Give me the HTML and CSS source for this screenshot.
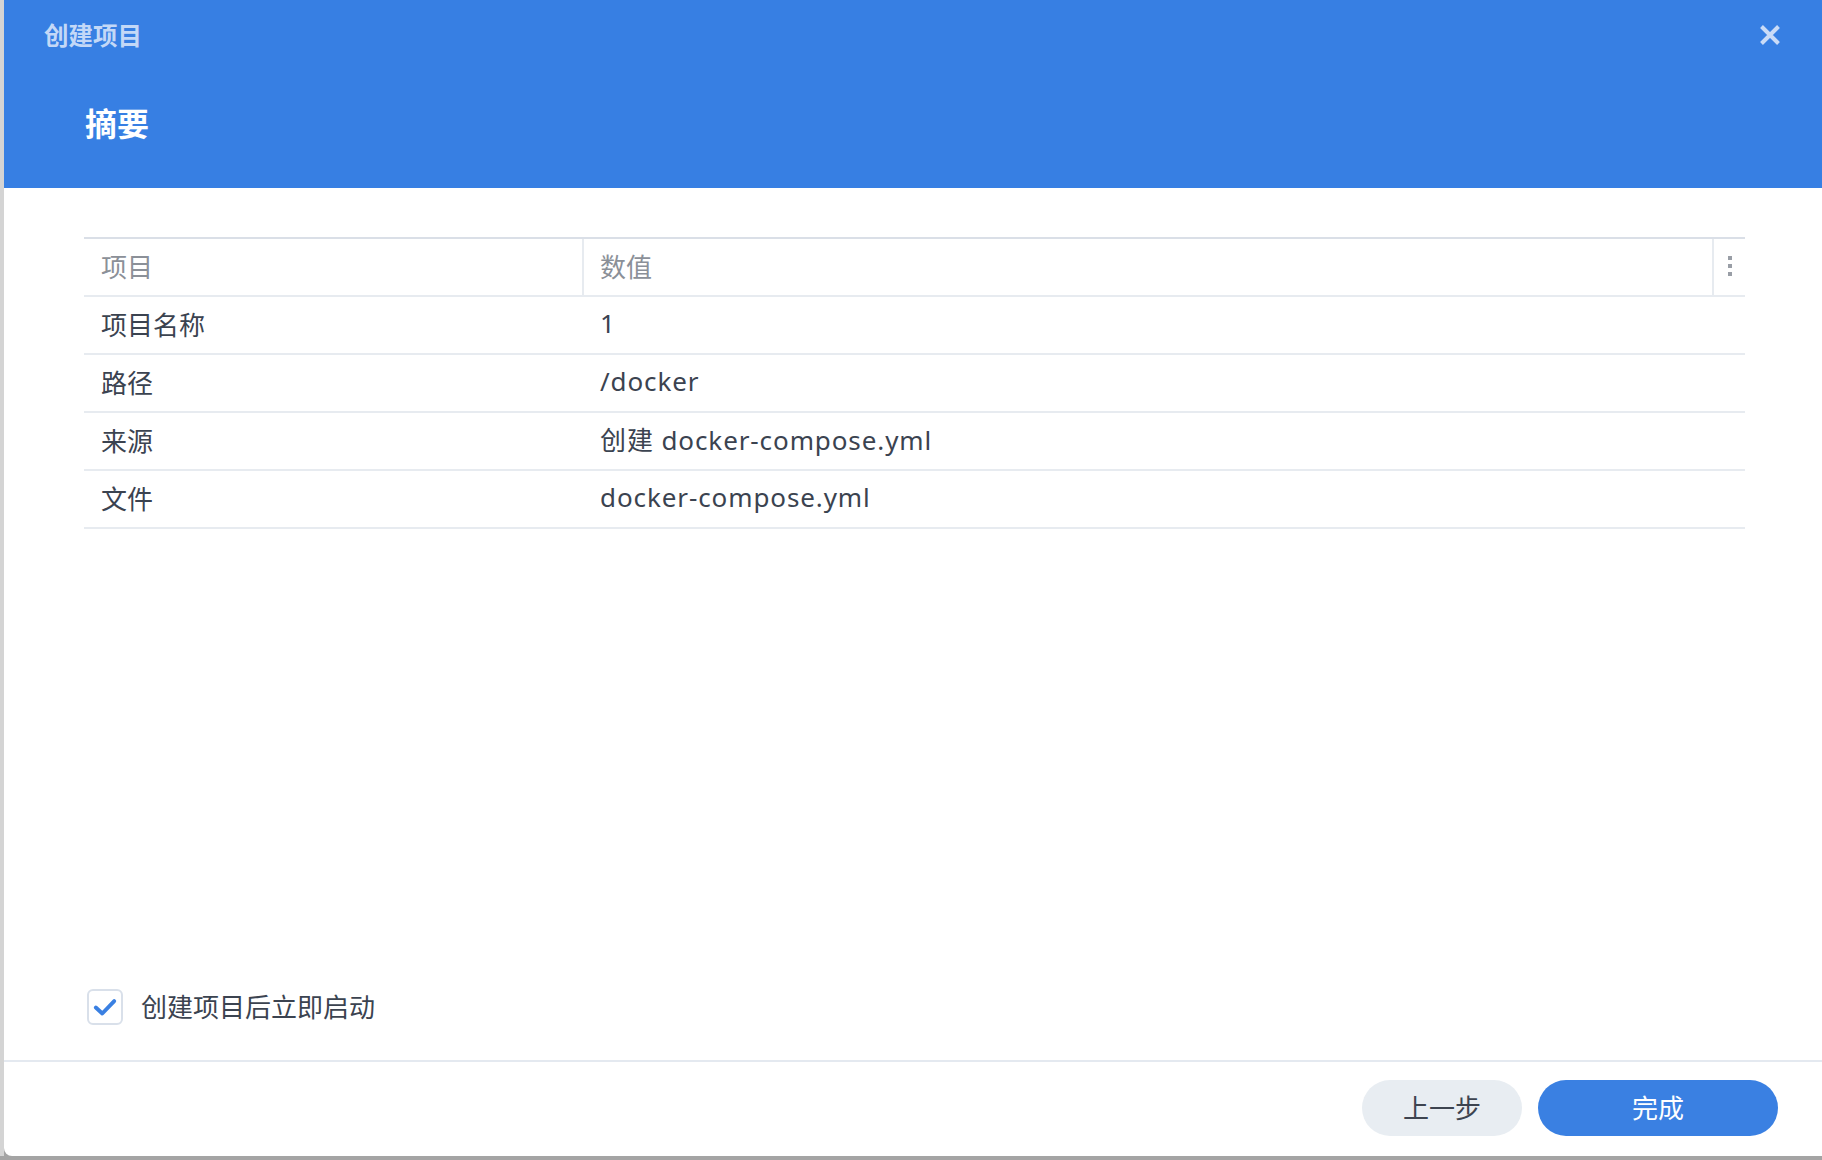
FILE: index.html
```html
<!DOCTYPE html>
<html lang="zh-CN">
<head>
<meta charset="utf-8">
<link rel="stylesheet" href="styles.css">
</head>
<body>
<div class="window">
  <header class="header">
    <div class="topbar">
      <span class="title">创建项目</span>
      <svg class="close" viewBox="0 0 22 22" width="22" height="22"><path d="M2.5 2.5 L19.5 19.5 M19.5 2.5 L2.5 19.5" stroke="#c9dbf7" stroke-width="4" stroke-linecap="butt"/></svg>
    </div>
    <h1 class="step">摘要</h1>
  </header>
  <main class="content">
    <div class="table">
      <div class="row head">
        <div class="cell c1">项目</div>
        <div class="cell c2">数值</div>
        <div class="cell c3"><span class="dots"><i></i><i></i><i></i></span></div>
      </div>
      <div class="row"><div class="cell c1">项目名称</div><div class="cell c2">1</div></div>
      <div class="row"><div class="cell c1">路径</div><div class="cell c2">/docker</div></div>
      <div class="row"><div class="cell c1">来源</div><div class="cell c2">创建 docker-compose.yml</div></div>
      <div class="row"><div class="cell c1">文件</div><div class="cell c2">docker-compose.yml</div></div>
    </div>
    <label class="check">
      <span class="box"><svg viewBox="0 0 24 24" width="26" height="26"><path d="M3.5 12.5 L9.5 18 L20.5 6.5" fill="none" stroke="#3a80e2" stroke-width="3.6" stroke-linecap="round" stroke-linejoin="round"/></svg></span>
      <span class="check-label">创建项目后立即启动</span>
    </label>
  </main>
  <footer class="footer">
    <button class="btn prev">上一步</button>
    <button class="btn done">完成</button>
  </footer>
</div>
</body>
</html>
```
FILE: styles.css
```css
html, body {
  margin: 0;
  padding: 0;
}
body {
  width: 1822px;
  height: 1160px;
  background: #a4a4a4;
  font-family: "Noto Sans", "Noto Sans CJK SC", sans-serif;
  overflow: hidden;
  position: relative;
}
body::before {
  content: "";
  position: absolute;
  left: 0;
  top: 0;
  width: 4px;
  height: 1156px;
  background: #d4d4d4;
}
.window {
  position: relative;
  margin-left: 4px;
  width: 1818px;
  height: 1156px;
  background: #fff;
  border-bottom-left-radius: 8px;
  display: flex;
  flex-direction: column;
  overflow: hidden;
}
.header {
  height: 188px;
  background: #377fe3;
  box-sizing: border-box;
  padding: 0 0 0 40px;
}
.topbar {
  height: 70px;
  display: flex;
  align-items: center;
  justify-content: space-between;
  padding-right: 41px;
}
.title {
  font-family: "Noto Sans CJK SC", sans-serif;
  font-size: 24.5px;
  font-weight: 700;
  color: #c3d8f7;
  margin-top: -2px;
}
.close {
  display: block;
}
.step {
  margin: 0 0 0 41px;
  padding-top: 32px;
  font-family: "Noto Sans CJK SC", sans-serif;
  font-size: 32px;
  font-weight: 700;
  color: #ffffff;
  line-height: 40px;
}
.content {
  flex: 1;
  padding: 49px 77px 0 80px;
  display: flex;
  flex-direction: column;
}
.table {
  border-top: 2px solid #dadfe7;
}
.row {
  display: flex;
  height: 58px;
  border-bottom: 2px solid #e7ebf0;
  box-sizing: border-box;
  align-items: stretch;
  font-size: 26px;
  color: #3b4350;
}
.row.head {
  height: 58px;
  color: #8b9098;
}
.cell {
  display: flex;
  align-items: center;
  box-sizing: border-box;
  padding-bottom: 4px;
}
.c1 {
  width: 498px;
  padding-left: 17px;
  font-family: "Noto Sans CJK SC", sans-serif;
}
.c2 {
  flex: 1;
  padding-left: 18px;
  letter-spacing: 0.9px;
}
.head .c2 {
  border-left: 2px solid #e7ebf0;
  padding-left: 16px;
  letter-spacing: 0;
  font-family: "Noto Sans CJK SC", sans-serif;
}
.c3 {
  width: 33px;
  border-left: 2px solid #e7ebf0;
  justify-content: center;
  padding-bottom: 2px;
}
.dots {
  display: flex;
  flex-direction: column;
  gap: 4px;
}
.dots i {
  display: block;
  width: 4px;
  height: 4px;
  background: #999ea6;
}
.check {
  margin-top: auto;
  margin-bottom: 35px;
  display: flex;
  align-items: center;
  gap: 18px;
  margin-left: 3px;
}
.box {
  width: 32px;
  height: 32px;
  border: 2px solid #d9e0ea;
  border-radius: 6px;
  display: flex;
  align-items: center;
  justify-content: center;
}
.check-label {
  font-family: "Noto Sans CJK SC", sans-serif;
  font-size: 26px;
  color: #3b4350;
  margin-top: -3px;
}
.footer {
  height: 96px;
  border-top: 2px solid #e4e9f0;
  box-sizing: border-box;
  display: flex;
  justify-content: flex-end;
  align-items: flex-start;
  padding-top: 18px;
  padding-right: 44px;
  gap: 16px;
}
.btn {
  height: 56px;
  border: none;
  border-radius: 28px;
  font-family: "Noto Sans CJK SC", sans-serif;
  font-size: 26px;
  cursor: pointer;
  padding: 0 0 4px 0;
}
.prev {
  width: 160px;
  background: #e8edf2;
  color: #3d4450;
}
.done {
  width: 240px;
  background: #3a80e2;
  color: #ffffff;
}
```
